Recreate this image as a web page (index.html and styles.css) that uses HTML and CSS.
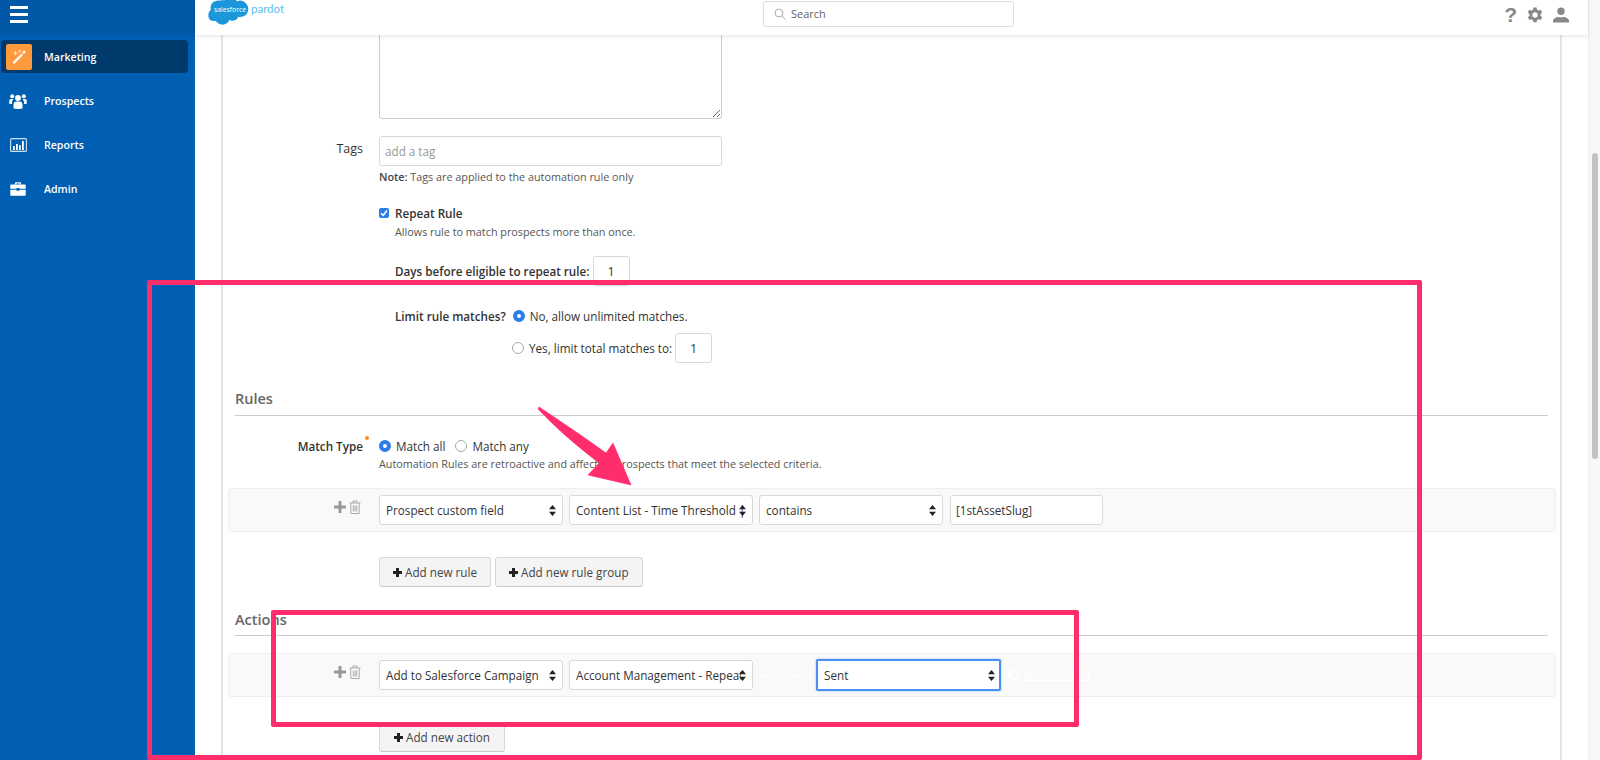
FILE: index.html
```html
<!DOCTYPE html>
<html lang="en">
<head>
<meta charset="utf-8">
<title>Pardot automation rule</title>
<link rel="stylesheet" href="styles.css">
</head>
<body>
<div class="app">
  <aside class="sidebar">
    <div class="side-head">
      <button class="burger" aria-label="Menu"><span></span><span></span><span></span></button>
    </div>
    <nav class="nav">
      <a class="nav-item active">
        <span class="nav-icon orange">
          <svg width="18" height="18" viewBox="0 0 18 18"><path d="M3 15.500 12 6.500l1.600 1.600-9 9z" transform="translate(-.5 -1)" fill="#fff"/><path d="M12.200 4.200l1.800-1.800 1.700 1.700-1.800 1.800z" fill="#fff"/><path d="M5 3.200h1v1.600h1.500v1H6v1.500H5V5.800H3.500v-1H5zM9.500 1.500h.8v1.200h1v.8h-1v1h-.8v-1h-1v-.8h1z" fill="#fff" opacity=".85"/></svg>
        </span>
        <span>Marketing</span>
      </a>
      <a class="nav-item">
        <span class="nav-icon">
          <svg width="18" height="16" viewBox="0 0 18 16" fill="#fff"><circle cx="9" cy="5" r="2.900"/><circle cx="3.200" cy="3.200" r="2"/><circle cx="14.800" cy="3.200" r="2"/><path d="M4.500 15.500v-4c0-1.800 1.400-3 3-3h3c1.600 0 3 1.200 3 3v4c-2.600.7-6.400.7-9 0z"/><path d="M3.600 6H2C.9 6 .2 6.900.2 8v2.500c.8.400 1.800.600 2.800.600V9.800c0-1.500.4-2.700 1.500-3.300A1.600 1.600 0 0 0 3.600 6zM14.400 6H16c1.100 0 1.800.9 1.800 2v2.500c-.8.400-1.800.600-2.800.600V9.800c0-1.500-.4-2.700-1.500-3.300.3-.3.600-.5.900-.5z"/></svg>
        </span>
        <span>Prospects</span>
      </a>
      <a class="nav-item">
        <span class="nav-icon">
          <svg width="17" height="14" viewBox="0 0 17 14"><rect x=".6" y=".6" width="15.800" height="12.800" rx="1" fill="none" stroke="#cfe3f5" stroke-width="1.100"/><path d="M3 8h1.800v4H3zM6 6h1.800v6H6zM9 7.200h1.800V12H9zM12 3h1.800v9H12z" fill="#fff"/></svg>
        </span>
        <span>Reports</span>
      </a>
      <a class="nav-item">
        <span class="nav-icon">
          <svg width="16" height="14" viewBox="0 0 16 14" fill="#fff"><path d="M5 2.500V1.300C5 .7 5.500.3 6 .3h4c.5 0 1 .4 1 1v1.200H9.800v-1H6.200v1z"/><path d="M1.300 2.500h13.400c.6 0 1 .4 1 1v3.200H9.500V6h-3v.7H.3V3.500c0-.6.4-1 1-1zM.3 7.700h6.200v1h3v-1h6.200v5c0 .6-.4 1-1 1H1.300c-.6 0-1-.4-1-1z"/></svg>
        </span>
        <span>Admin</span>
      </a>
    </nav>
  </aside>

  <div class="main">
    <header class="topbar">
      <div class="logo">
        <svg class="cloud" width="41" height="27" viewBox="0 0 42 27"><path d="M17 1c2-2 6-3 9-2 2 1 3 2 4 3 2-1 4-1 6 0 4 2 6 6 5 10-1 4-4 6-8 6-1 0-2 0-2-.2-1 3-4 4.200-6 4.200-1 0-2 0-3-1-1 3-4 5-7 5-3 0-6-2-7-4-4 1-7-1-7.500-4C0 15 1 12 3 11 2 8 3 4 6 2.500 10 1 14 1 17 1z" fill="#1b96d8"/></svg>
        <span class="cloud-text">salesforce</span>
        <span class="pardot">pardot</span>
      </div>
      <div class="search">
        <svg width="12" height="12" viewBox="0 0 12 12" fill="none" stroke="#aaa" stroke-width="1"><circle cx="5" cy="5" r="3.900"/><path d="M8 8l3.500 3.500"/></svg>
        <span>Search</span>
      </div>
      <div class="tools">
        <span class="help">?</span>
        <svg width="16" height="17" viewBox="0 0 15 16"><path fill-rule="evenodd" d="M6 .5h3l.4 2 1.500.8 1.900-.7 1.500 2.600-1.500 1.300v1.900l1.500 1.300-1.500 2.600-1.900-.7-1.500.8-.4 2H6l-.4-2-1.500-.8-1.900.7L.7 9.700l1.500-1.300V6.500L.7 5.200l1.500-2.600 1.900.7 1.500-.8zM7.500 5a2.500 2.500 0 1 0 0 5 2.500 2.500 0 0 0 0-5z" fill="#888"/></svg>
        <svg width="16" height="16" viewBox="0 0 16 16" fill="#888"><circle cx="8" cy="4.200" r="3.700"/><path d="M0 15.500v-1.800c0-2 2-3 5.200-4 1 .7 4.600.7 5.600 0 3.200 1 5.200 2 5.200 4v1.800z"/></svg>
      </div>
    </header>

    <div class="content">
      <div class="panel">
        <div class="field-row">
          <span></span>
          <textarea class="notes" aria-label="Description"></textarea>
        </div>

        <div class="field-row tags-row">
          <label class="label plain">Tags</label>
          <input class="input wide" placeholder="add a tag">
        </div>
        <div class="field-row note-row">
          <span></span>
          <p class="note"><b>Note:</b> Tags are applied to the automation rule only</p>
        </div>

        <div class="field-row repeat-row">
          <span></span>
          <label class="check-line"><span class="checkbox"><svg width="8" height="8" viewBox="0 0 8 8"><path d="M1 4.200 3.200 6.300 7 1.500" fill="none" stroke="#fff" stroke-width="1.500"/></svg></span><b>Repeat Rule</b></label>
        </div>
        <div class="field-row allows-row">
          <span></span>
          <p class="note indent">Allows rule to match prospects more than once.</p>
        </div>

        <div class="field-row days-row">
          <span></span>
          <div class="inline indent"><b>Days before eligible to repeat rule:</b><span class="num">1</span></div>
        </div>

        <div class="field-row limit-row">
          <span></span>
          <div class="inline indent"><b>Limit rule matches?</b><span class="radio on shifted"></span><span>No, allow unlimited matches.</span></div>
        </div>
        <div class="field-row limit2-row">
          <span></span>
          <div class="inline limit2"><span class="radio"></span><span>Yes, limit total matches to:</span><span class="num">1</span></div>
        </div>

        <h2 class="section rules">Rules</h2>

        <div class="field-row match-row">
          <label class="label">Match Type<i class="req"></i></label>
          <div class="inline match"><span class="radio on"></span><span>Match all</span><span class="radio second"></span><span>Match any</span></div>
        </div>
        <div class="field-row auto-row">
          <span></span>
          <p class="note">Automation Rules are retroactive and affect all prospects that meet the selected criteria.</p>
        </div>

        <div class="criteria rule-row">
          <div class="row-tools">
            <svg width="12" height="12" viewBox="0 0 12 12"><path d="M4.500 0h3v4.500H12v3H7.500V12h-3V7.500H0v-3h4.500z" fill="#999"/></svg>
            <svg width="12" height="14" viewBox="0 0 12 14" fill="none" stroke="#aaa"><path d="M.5 3h11M4 3V1h4v2M1.800 3v10.500h8.400V3M4.300 5.500v6M6 5.500v6M7.700 5.500v6"/></svg>
          </div>
          <div class="sel"><select><option>Prospect custom field</option></select><svg class="updown" width="7" height="11" viewBox="0 0 7 11"><path d="M3.500 0 7 4.300H0zM3.500 11 0 6.700h7z" fill="#222"/></svg></div>
          <div class="sel tight"><select><option>Content List - Time Threshold | Days</option></select><svg class="updown" width="7" height="11" viewBox="0 0 7 11"><path d="M3.500 0 7 4.300H0zM3.500 11 0 6.700h7z" fill="#222"/></svg></div>
          <div class="sel"><select><option>contains</option></select><svg class="updown" width="7" height="11" viewBox="0 0 7 11"><path d="M3.500 0 7 4.300H0zM3.500 11 0 6.700h7z" fill="#222"/></svg></div>
          <input class="input value" value="[1stAssetSlug]">
        </div>

        <div class="buttons add-rule">
          <button class="btn"><span class="plus"></span>Add new rule</button>
          <button class="btn"><span class="plus"></span>Add new rule group</button>
        </div>

        <h2 class="section actions">Actions</h2>

        <div class="criteria action-row">
          <div class="row-tools">
            <svg width="12" height="12" viewBox="0 0 12 12"><path d="M4.500 0h3v4.500H12v3H7.500V12h-3V7.500H0v-3h4.500z" fill="#999"/></svg>
            <svg width="12" height="14" viewBox="0 0 12 14" fill="none" stroke="#aaa"><path d="M.5 3h11M4 3V1h4v2M1.800 3v10.500h8.400V3M4.300 5.500v6M6 5.500v6M7.700 5.500v6"/></svg>
          </div>
          <div class="sel"><select><option>Add to Salesforce Campaign</option></select><svg class="updown" width="7" height="11" viewBox="0 0 7 11"><path d="M3.500 0 7 4.300H0zM3.500 11 0 6.700h7z" fill="#222"/></svg></div>
          <div class="sel"><select><option>Account Management - Repeat Rule</option></select><svg class="updown" width="7" height="11" viewBox="0 0 7 11"><path d="M3.500 0 7 4.300H0zM3.500 11 0 6.700h7z" fill="#222"/></svg></div>
          <span class="ghost status">with status</span>
          <div class="sel focus"><select><option>Sent</option></select><svg class="updown" width="7" height="11" viewBox="0 0 7 11"><path d="M3.500 0 7 4.300H0zM3.500 11 0 6.700h7z" fill="#222"/></svg></div>
          <span class="ghost refresh">
            <svg width="12" height="12" viewBox="0 0 12 12" fill="none" stroke="#fff" stroke-width="2"><path d="M10.500 6A4.500 4.500 0 1 1 9 2.600"/></svg>
            <u>Refresh Data</u>
          </span>
        </div>

        <div class="buttons add-action">
          <button class="btn wide-btn"><span class="plus"></span>Add new action</button>
        </div>
      </div>
    </div>
  </div>

  <div class="scrollbar"><div class="thumb"></div></div>
</div>

<div class="annot-outer"></div>
<div class="annot-inner"></div>
<svg class="annot-arrow" width="110" height="90" viewBox="530 400 110 90"><path d="M539 407 C 560 421 584 437 606 453 L 613 443 L 631 485 L 588 475 L 599 463 C 577 446 557 429 538 409 Z" fill="#ff2d6b" stroke="#ff2d6b" stroke-width=".6" stroke-linejoin="round"/></svg>
</body>
</html>
```

FILE: styles.css
```css
* { box-sizing: border-box; }
html, body { margin: 0; height: 100%; overflow: hidden; }
body {
  font-family: "Open Sans", "Noto Sans", sans-serif;
  font-size: 11.700px;
  line-height: 18px;
  color: #333;
  background: #fff;
}
p, h2 { margin: 0; }
b { font-weight: 600; }

.app { display: flex; height: 760px; }

/* sidebar */
.sidebar { width: 195px; flex: none; background: #005fb2; }
.side-head { height: 35px; background: #0058a6; padding: 6px 0 0 10px; }
.burger { display: flex; flex-direction: column; gap: 4px; width: 18px; padding: 0; border: 0; background: none; }
.burger span { display: block; height: 3px; background: #fff; }
.nav { padding: 5px 7px 0 1px; }
.nav-item {
  display: flex; align-items: center;
  height: 33px; margin-bottom: 11.300px;
  padding-left: 5px; gap: 12px;
  color: #fff; font-weight: 600; font-size: 10.600px;
  border-radius: 4px;
}
.nav-item.active { background: #00396b; }
.nav-icon { width: 26px; height: 26px; display: flex; align-items: center; justify-content: center; border-radius: 2px; flex: none; padding-right: 2px; }
.nav-icon.orange { background: #ff9a3c; padding-right: 0; }

/* main */
.main { flex: 1; min-width: 0; display: flex; flex-direction: column; }
.topbar {
  height: 35px; flex: none; position: relative; z-index: 1;
  display: flex; align-items: flex-start;
  background: #fff; box-shadow: 0 1px 4px rgba(0,0,0,.12);
  padding: 1px 19px 0 13px;
}
.logo { width: 555px; display: flex; align-items: flex-start; position: relative; height: 26px; margin-top: -1px; }
.cloud { flex: none; margin-top: -1px; }
.cloud-text { position: absolute; left: 6px; top: 1px; color: #fff; font-size: 6.800px; line-height: 18px; }
.pardot { margin: 0 0 0 2px; font-family: "Lato", sans-serif; font-size: 11.500px; line-height: 18px; color: #62bdec; }
.search {
  width: 251px; height: 26px; display: flex; align-items: center; gap: 5px;
  padding-left: 10px; color: #666; font-size: 11px;
  border: 1px solid #ddd; border-radius: 3px;
}
.tools { margin-left: auto; display: flex; align-items: center; gap: 10px; height: 26px; margin-top: 1px; }
.help { font-size: 21px; font-weight: 700; color: #888; line-height: 26px; font-family: "Liberation Sans", sans-serif; }

/* content */
.content { flex: 1; min-height: 0; padding: 0 26px; overflow: hidden; }
.panel { height: 100%; border-left: 2px solid #e4e4e4; border-right: 2px solid #e4e4e4; }
.field-row { display: grid; grid-template-columns: 140px 1fr; column-gap: 16px; }
.label { text-align: right; font-weight: 600; position: relative; }
.label.plain { font-weight: 400; font-size: 12.500px; line-height: 26px; }
.req { position: absolute; right: -6px; top: -1px; width: 4px; height: 4px; border-radius: 50%; background: #ff8a1f; }

.notes { width: 343px; height: 84px; display: block; border: 1px solid #ccc; border-top: 0; border-radius: 0 0 3px 3px; background: #fff; }
.input { height: 30px; font: inherit; color: #333; border: 1px solid #d8d8d8; border-radius: 3px; padding: 0 5px; background: #fff; outline: 0; }
.input::placeholder { color: #999; }
.wide { width: 343px; }
.tags-row { margin-top: 17px; }
.note-row { margin-top: 2px; }
.note { color: #555; font-size: 10.800px; }
.note b { color: #444; }
.indent { margin-left: 16px; }
.repeat-row { margin-top: 18px; }
.check-line { display: flex; align-items: center; gap: 6px; }
.checkbox { width: 10px; height: 10px; background: #2b7de9; border-radius: 2px; display: flex; align-items: center; justify-content: center; }
.allows-row { margin-top: 1px; }
.days-row { margin-top: 15px; }
.inline { display: flex; align-items: center; gap: 5px; }
.num { width: 37px; height: 30px; margin-left: -2px; border: 1px solid #d8d8d8; border-radius: 3px; text-align: center; line-height: 30px; font-size: 12.500px; }
.limit-row { margin-top: 21px; }
.limit2-row { margin-top: 8px; }
.limit2 { margin-left: 133px; }
.radio { width: 12px; height: 12px; border-radius: 50%; border: 1px solid #aaa; flex: none; background: #fff; }
.radio.on { border: 4px solid #2b7de9; }
.radio.shifted { margin-left: 2px; }
.radio.second { margin-left: 5px; }

.section { font-size: 14.500px; font-weight: 600; color: #666; margin-left: 12px; margin-right: 12px; line-height: 20px; border-bottom: 1px solid #ccc; padding-bottom: 6px; }
.rules { margin-top: 26px; }
.match-row { margin-top: 21px; }
.auto-row { margin-top: 0; }

.criteria {
  display: flex; align-items: center; gap: 6px;
  height: 44px; margin-left: 5px; margin-right: 4px;
  background: #f9f9f9; border: 1px solid #eee; border-radius: 3px;
  padding-left: 150px; position: relative;
}
.row-tools { position: absolute; left: 105px; top: 11px; display: flex; align-items: center; gap: 3px; }
.rule-row { margin-top: 15px; }
.action-row { margin-top: 17px; }
.sel { position: relative; width: 184px; height: 30px; flex: none; }
.sel select {
  width: 100%; height: 100%; appearance: none; font: inherit; color: #333;
  background: #fff; border: 1px solid #d8d8d8; border-radius: 3px;
  padding: 0 11px 0 6px; outline: 0;
}
.sel.tight select { padding-right: 8px; }
.updown { position: absolute; right: 7px; top: 10px; }
.value { width: 153px; margin-left: 1px; }
.focus { width: 185px; height: 32px; }
.focus select { border: 2px solid #4a90f0; border-radius: 2px; box-shadow: 0 0 2px #7fb2f5; padding-left: 6px; }
.focus .updown { right: 6px; top: 11px; }
.ghost { color: #fff; font-size: 10.800px; font-weight: 600; white-space: nowrap; display: inline-flex; align-items: center; gap: 3px; }
.status { width: 50px; margin-left: 1px; font-size: 9.600px; }
.refresh { margin-left: 1px; }

.buttons { padding-left: 156px; display: flex; gap: 4px; }
.add-rule { margin-top: 25px; }
.add-action { margin-top: 25px; }
.btn {
  height: 30px; padding: 0 13px; font: inherit; color: #444;
  background: #f4f4f4; border: 1px solid #d8d8d8; border-bottom-color: #c8c8c8; border-radius: 3px;
  display: inline-flex; align-items: center; gap: 3px;
}
.wide-btn { padding: 0 14px; }
.plus { width: 9px; height: 9px; background: linear-gradient(#222,#222) center/3px 9px no-repeat, linear-gradient(#222,#222) center/9px 3px no-repeat; }
.actions { margin-top: 23px; padding-bottom: 5px; }

/* scrollbar */
.scrollbar { width: 12px; flex: none; background: #f8f8f8; border-left: 1px solid #eee; padding: 153px 2px 0 3px; }
.thumb { height: 306px; background: #c2c2c2; border-radius: 3px; }

/* annotations over the screenshot */
.annot-outer, .annot-inner { position: absolute; border: 5px solid #ff2d6b; border-radius: 2px; pointer-events: none; }
.annot-outer { left: 147px; top: 280px; width: 1275px; height: 480px; }
.annot-inner { left: 271px; top: 610px; width: 808px; height: 117px; }
.annot-arrow { position: absolute; left: 530px; top: 400px; }
```
